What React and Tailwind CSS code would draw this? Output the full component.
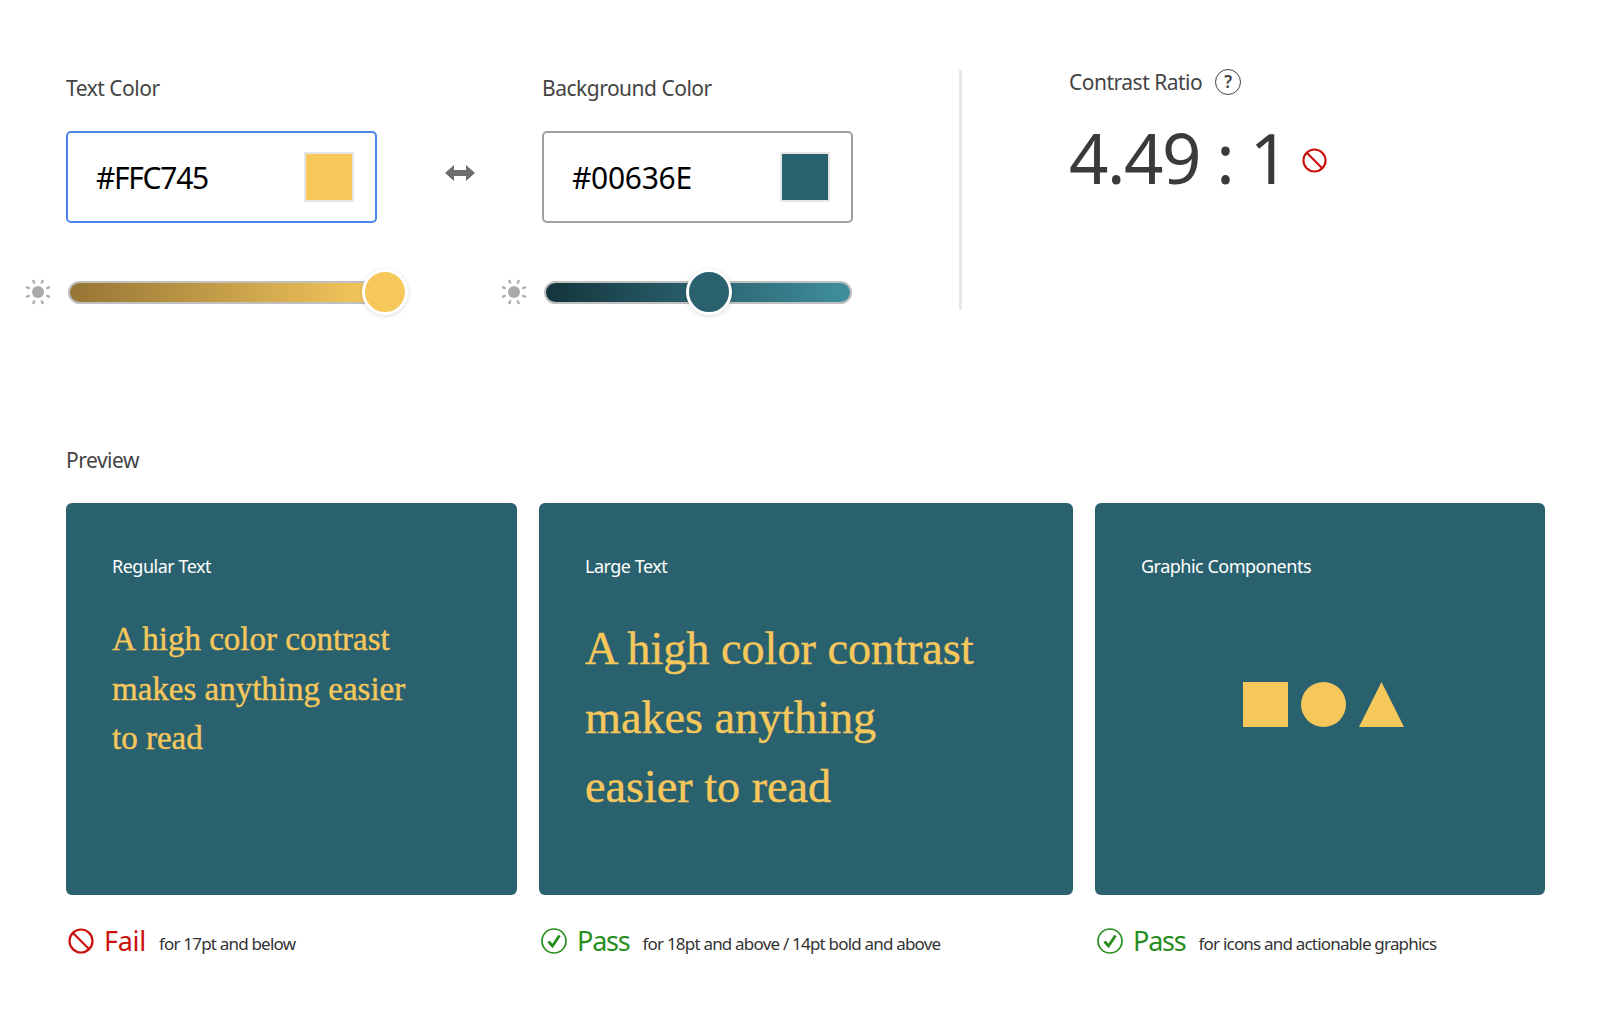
import React from 'react';

const SANS = "font-['Noto_Sans',sans-serif]";
const YELLOW = 'bg-[#f6c85c]';
const LABEL = 'text-[21px] leading-[30px] text-[#444444] tracking-[-0.5px]';
const SERIF = "font-['Liberation_Serif',serif] text-[#f6c85c] [-webkit-text-stroke:0.4px_#f6c85c]";

const SunIcon = function () {
    const rays = [0, 45, 90, 135, 180, 225, 270, 315];
    return (
        <svg width="28" height="28" viewBox="0 0 28 28" className="shrink-0">
            <circle cx="14" cy="14" r="6" fill="#aaaaaa" />
            {rays.map((angle) => (
                <line key={angle} x1="14" y1="1" x2="14" y2="5" stroke="#aaaaaa" strokeWidth="2.2" transform={`rotate(${angle + 22.5} 14 14)`} />
            ))}
        </svg>
    );
};

const BlockIcon = function ({ size }) {
    return (
        <svg width={size} height={size} viewBox="0 0 26 26" className="shrink-0">
            <circle cx="13" cy="13" r="11.5" fill="none" stroke="#c9100c" strokeWidth="2.2" />
            <line x1="5" y1="5" x2="21" y2="21" stroke="#c9100c" strokeWidth="2.2" />
        </svg>
    );
};

const CheckIcon = function () {
    return (
        <svg width="26" height="26" viewBox="0 0 26 26" className="shrink-0">
            <circle cx="13" cy="13" r="12" fill="none" stroke="#268e1c" strokeWidth="1.7" />
            <path d="M7.5 13.5 L11.5 18 L18.5 7.5" fill="none" stroke="#268e1c" strokeWidth="2.8" />
        </svg>
    );
};

const ColorInput = function ({ value, borderClass, swatchClass, trackingClass }) {
    return (
        <div className={`flex items-center justify-between w-[311px] h-[92px] bg-white border-2 rounded-[5px] pl-[28px] pr-[21px] ${borderClass}`}>
            <span className={`text-[30px] text-black ${trackingClass}`}>{value}</span>
            <div className={`w-[50px] h-[50px] border-2 border-[#e6e6e6] ${swatchClass}`} />
        </div>
    );
};

const Slider = function ({ gradient, thumbClass, thumbLeft }) {
    return (
        <div className="flex items-center ml-[-42px]">
            <SunIcon />
            <div className={`relative ml-[16px] w-[309px] h-[23px] rounded-full border-2 border-[#c0c0c0] ${gradient}`}>
                <div
                    className={`absolute top-1/2 w-[46px] h-[46px] -translate-x-1/2 -translate-y-1/2 rounded-full border-[3px] border-white shadow-[0_1px_5px_rgba(0,0,0,0.15)] ${thumbClass}`}
                    style={{ left: thumbLeft }}
                />
            </div>
        </div>
    );
};

const PreviewCard = function ({ title, widthClass, children }) {
    return (
        <div className={`h-[392px] bg-[#2a616e] rounded-[6px] pl-[46px] pt-[50px] ${widthClass}`}>
            <div className="text-[18px] leading-[26px] text-white tracking-[-0.5px]">{title}</div>
            {children}
        </div>
    );
};

const Result = function ({ icon, label, labelClass, note, widthClass }) {
    return (
        <div className={`flex items-center pl-[2px] ${widthClass}`}>
            {icon}
            <span className={`ml-[10px] text-[27px] leading-[36px] ${labelClass}`}>{label}</span>
            <span className="ml-[13px] mt-[5px] text-[17px] leading-[24px] text-[#333333] tracking-[-0.8px]">{note}</span>
        </div>
    );
};

const App = function () {
    return (
        <div className={`w-[1600px] h-[1021px] bg-white pl-[66px] pt-[70px] overflow-hidden ${SANS}`}>

            {/* pickers */}

            <div className="flex h-[240px]">

                <div className="w-[311px]">
                    <div className={`${LABEL} mt-[3px] mb-[28px]`}>Text Color</div>
                    <ColorInput value="#FFC745" borderClass="border-[#4b84ea]" swatchClass={YELLOW} trackingClass="tracking-[-1.3px]" />
                    <div className="mt-[55px]">
                        <Slider gradient="bg-gradient-to-r from-[#967636] to-[#f6c85c]" thumbClass={YELLOW} thumbLeft="315px" />
                    </div>
                </div>

                <div className="flex justify-center w-[165px] pt-[94px]">
                    <svg width="30" height="18" viewBox="0 0 30 18">
                        <path d="M0 9 L9 1 L9 6 L21 6 L21 1 L30 9 L21 17 L21 12 L9 12 L9 17 Z" fill="#6e6e6e" />
                    </svg>
                </div>

                <div className="w-[310px]">
                    <div className={`${LABEL} mt-[3px] mb-[28px]`}>Background Color</div>
                    <ColorInput value="#00636E" borderClass="border-[#a0a0a0]" swatchClass="bg-[#2a616e]" trackingClass="tracking-[-0.3px]" />
                    <div className="mt-[55px]">
                        <Slider gradient="bg-gradient-to-r from-[#14353c] via-[#2a616e] to-[#408f9e]" thumbClass="bg-[#2a616e]" thumbLeft="163px" />
                    </div>
                </div>

                <div className="w-[3px] h-[240px] ml-[107px] bg-[#e8e8e8]" />

                <div className="ml-[107px] mt-[-3px]">
                    <div className="flex items-center gap-[13px]">
                        <span className={LABEL}>Contrast Ratio</span>
                        <span className="flex items-center justify-center w-[26px] h-[26px] rounded-full border-[1.5px] border-[#444444] text-[17px] font-semibold text-[#444444]">?</span>
                    </div>
                    <div className="flex items-center mt-[18px]">
                        <span className="text-[69px] leading-[84px] text-[#3a3a3a] tracking-[-1.5px]">4.49 : 1</span>
                        <div className="ml-[14px] mt-[6px]">
                            <BlockIcon size={25} />
                        </div>
                    </div>
                </div>

            </div>

            {/* preview */}

            <div className={`${LABEL} mt-[135px] mb-[28px]`}>Preview</div>

            <div className="flex gap-[22px]">

                <PreviewCard title="Regular Text" widthClass="w-[451px]">
                    <div className={`mt-[36px] text-[33px] leading-[49.6px] w-[310px] ${SERIF}`}>A high color contrast makes anything easier to read</div>
                </PreviewCard>

                <PreviewCard title="Large Text" widthClass="w-[534px]">
                    <div className={`mt-[35px] text-[46.2px] leading-[69px] w-[400px] ${SERIF}`}>A high color contrast makes anything easier to read</div>
                </PreviewCard>

                <PreviewCard title="Graphic Components" widthClass="w-[450px]">
                    <div className="flex items-center gap-[13px] mt-[103px] ml-[102px]">
                        <div className={`w-[45px] h-[45px] ${YELLOW}`} />
                        <div className={`w-[45px] h-[45px] rounded-full ${YELLOW}`} />
                        <svg width="45" height="45" viewBox="0 0 45 45">
                            <path d="M22.5 0 L45 45 L0 45 Z" fill="#f6c85c" />
                        </svg>
                    </div>
                </PreviewCard>

            </div>

            {/* results */}

            <div className="flex gap-[22px] mt-[28px]">
                <Result icon={<BlockIcon size={26} />} label="Fail" labelClass="text-[#c9100c] tracking-[-0.3px]" note="for 17pt and below" widthClass="w-[451px]" />
                <Result icon={<CheckIcon />} label="Pass" labelClass="text-[#268e1c] tracking-[-1.2px]" note="for 18pt and above / 14pt bold and above" widthClass="w-[534px]" />
                <Result icon={<CheckIcon />} label="Pass" labelClass="text-[#268e1c] tracking-[-1.2px]" note="for icons and actionable graphics" widthClass="w-[450px]" />
            </div>

        </div>
    );
};

export default App;
